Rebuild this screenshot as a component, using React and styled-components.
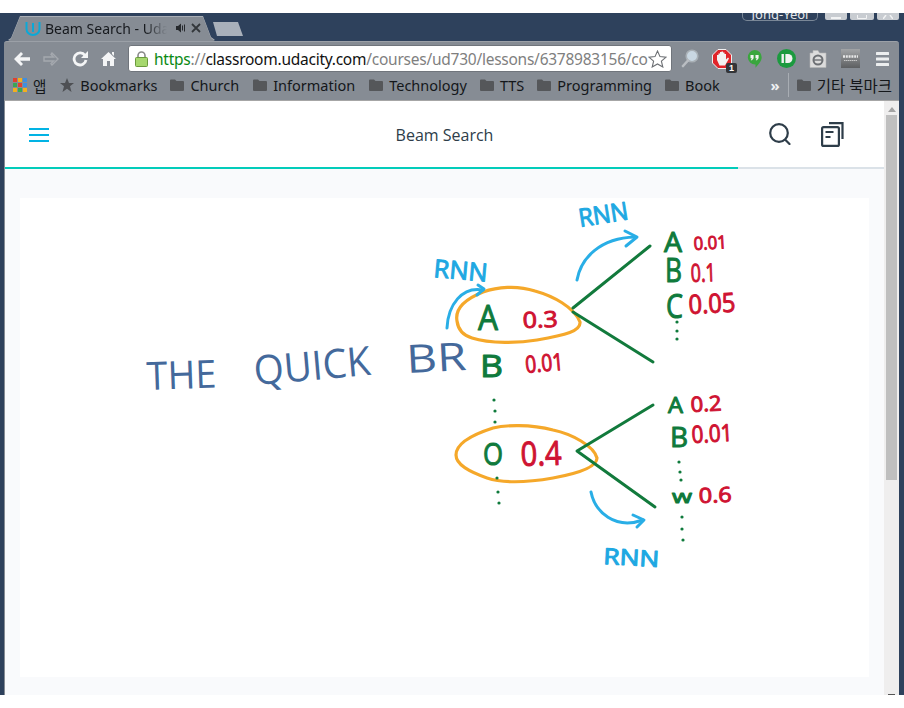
import styled, { createGlobalStyle } from "styled-components"

const UI_FONT = `"Noto Sans", "Open Sans", "Noto Sans CJK KR", sans-serif`

const GlobalStyle = createGlobalStyle`
    html, body {
        margin: 0;
        padding: 0;
        background: #ffffff;
    }
    body {
        font-family: ${UI_FONT};
    }
`

const Screen = styled.div`
    width: 904px;
    height: 708px;
    padding: 13px 0;
    box-sizing: border-box;
    overflow: hidden;
`

const Desktop = styled.div`
    height: 682px;
    background: #2e415c;
    padding: 0 5px 0 4px;
    display: flex;
    flex-direction: column;
`

const TabStrip = styled.div`
    height: 28px;
    flex: none;
    display: flex;
    align-items: flex-end;
    padding-left: 4px;
`

const TabOutline = styled.div`
    filter: drop-shadow(0 -1px 0 #a9aeb5);
`

const Tab = styled.div`
    width: 207px;
    height: 24px;
    box-sizing: border-box;
    background: #868c94;
    clip-path: polygon(0 100%, 3px 92%, 12px 0, 195px 0, 203px 88%, 207px 100%);
    display: flex;
    align-items: center;
    padding: 0 0 2px 17px;
    color: #16191d;
`

const TabTitle = styled.span`
    width: 122px;
    margin-left: 4px;
    font-size: 14px;
    white-space: nowrap;
    overflow: hidden;
    mask-image: linear-gradient(to right, #000 82%, transparent 100%);
`

const TabAudio = styled.svg`
    margin-left: 9px;
`

const TabClose = styled.svg`
    margin-left: 5px;
`

const NewTab = styled.div`
    width: 30px;
    height: 14px;
    margin: 0 auto 5px -2px;
    background: #a9b0ba;
    clip-path: polygon(0 0, 25px 0, 30px 100%, 4px 100%);
`

const WindowTop = styled.div`
    align-self: flex-start;
    display: flex;
`

const UserBadge = styled.div`
    width: 76px;
    height: 8px;
    box-sizing: border-box;
    margin-right: 4px;
    border: 1px solid #7a8797;
    border-top: none;
    border-radius: 0 0 5px 5px;
    color: #e4e7ea;
    font-size: 13px;
    line-height: 3px;
    text-align: center;
    overflow: hidden;
`

const WindowButton = styled.div`
    width: ${p => p.$w}px;
    height: 7px;
    margin-left: 3px;
    background: #c8ccd1;
    border-radius: 0 0 2px 2px;
    display: flex;
    justify-content: center;
    align-items: flex-end;
`

const WindowGlyph = styled.svg`
    display: block;
    margin-bottom: 1px;
`

const Toolbar = styled.div`
    height: 31px;
    flex: none;
    box-sizing: border-box;
    background: #868c94;
    border-top: 1px solid #9ba0a7;
    border-radius: 3px 3px 0 0;
    display: flex;
    align-items: center;
    padding: 3px 0 0 3px;
`

const NavSlot = styled.div`
    width: 29px;
    display: flex;
    justify-content: center;
`

const UrlBox = styled.div`
    width: 544px;
    height: 27px;
    margin: 0 2px 0 5px;
    flex: none;
    box-sizing: border-box;
    background: #ffffff;
    border: 1px solid #70757c;
    border-radius: 3px;
    display: flex;
    align-items: center;
    padding: 0 3px 0 6px;
    font-size: 15.5px;
    letter-spacing: -0.25px;
    color: #7f7f7f;
`

const UrlText = styled.span`
    width: 494px;
    margin-left: 6px;
    white-space: nowrap;
    overflow: hidden;
`

const Scheme = styled.span`
    color: #0b8a14;
`

const Host = styled.span`
    color: #111111;
`

const ExtSlot = styled.div`
    width: 32px;
    flex: none;
    display: flex;
    justify-content: center;
    align-items: center;
    position: relative;
`

const ExtBadge = styled.span`
    position: absolute;
    left: 20px;
    top: 14px;
    width: 11px;
    height: 10px;
    background: #333538;
    border-radius: 2px;
    color: #ffffff;
    font: 700 9px/10px "Liberation Sans", sans-serif;
    text-align: center;
`

const BookmarkBar = styled.div`
    height: 28px;
    flex: none;
    box-sizing: border-box;
    background: #868c94;
    display: flex;
    align-items: center;
    padding: 0 0 2px 9px;
    font-size: 14.5px;
    color: #14171a;
`

const Bookmark = styled.div`
    display: flex;
    align-items: center;
    gap: 6px;
    margin-right: ${p => p.$gap ?? 14}px;
    white-space: nowrap;
`

const CjkLabel = styled.span`
    font-size: 15.5px;
`

const Chevron = styled.span`
    margin-left: auto;
    margin-right: 8px;
    color: #eef0f2;
    font-size: 15px;
    font-weight: 700;
    line-height: 1;
`

const Divider = styled.div`
    width: 1px;
    height: 24px;
    margin-right: 8px;
    background: #a8adb3;
`

const Viewport = styled.div`
    flex: 1;
    min-height: 0;
    display: flex;
    border-top: 1px solid #a6a6a6;
    border-left: 1px solid #868c94;
`

const Page = styled.div`
    flex: 1;
    display: flex;
    flex-direction: column;
    background: #f9fafc;
`

const Header = styled.header`
    height: 66px;
    flex: none;
    box-sizing: border-box;
    background: #ffffff;
    display: grid;
    grid-template-columns: 1fr auto 1fr;
    align-items: center;
    padding: 0 40px 0 24px;
    color: #2e3d49;
`

const Burger = styled.div`
    width: 20px;
    display: flex;
    flex-direction: column;
    gap: 4px;
    margin-top: 1px;

    span {
        height: 2px;
        background: #02b3e4;
    }
`

const LessonTitle = styled.div`
    margin: 2px 0 0 16px;
    font-family: "Open Sans", sans-serif;
    font-size: 16px;
`

const HeaderIcons = styled.div`
    display: flex;
    align-items: center;
    justify-content: flex-end;
    gap: 30px;
`

const Progress = styled.div`
    height: 2px;
    flex: none;
    background: #dbe2e8;
`

const ProgressFill = styled.div`
    height: 100%;
    background: #02ccba;
`

const Lesson = styled.main`
    flex: 1;
    padding: 29px 15px 18px;
    display: flex;
`

const Card = styled.div`
    flex: 1;
    background: #ffffff;
`

const Sketch = styled.svg`
    display: block;
    width: 849px;
    height: 479px;
`

const Ink = styled.text`
    font-family: "Open Sans", "Liberation Sans", sans-serif;
    fill: ${p => p.$color};
    stroke: ${p => p.$color};
    stroke-width: ${p => p.$weight}px;
    stroke-linejoin: round;
`

const Scrollbar = styled.div`
    width: 15px;
    flex: none;
    background: #efeeee;
    display: flex;
    flex-direction: column;
    align-items: center;
    padding-top: 6px;
    box-sizing: border-box;
`

const ScrollArrow = styled.div`
    width: 0;
    height: 0;
    border-left: 4px solid transparent;
    border-right: 4px solid transparent;
    border-bottom: 5px solid #a3a3a3;
`

const ScrollThumb = styled.div`
    width: 11px;
    height: 365px;
    margin-top: 3px;
    background: #bfbfbf;
`

const ScrollEnd = styled.div`
    width: 7px;
    height: 1px;
    margin-top: auto;
    background: #555555;
`

const BLUE = "#1ea8e2"
const SLATE = "#44699b"
const GREEN = "#0f7a3c"
const RED = "#cf1332"
const ORANGE = "#f5a82a"

// x, baseline, width, height of the written word, and its tilt
const words = [
    ["THE", 147, 390, 70, 28, -2, SLATE],
    ["QUICK", 255, 385, 117, 29, -5, SLATE],
    ["BR", 407, 373, 60, 28, -3, SLATE],
    ["RNN", 580, 227, 50, 18, -9, BLUE],
    ["RNN", 433, 277, 54, 18, 5, BLUE],
    ["RNN", 603, 564, 56, 16, 3, BLUE],
    ["A", 478, 330, 20, 25, 0, GREEN],
    ["0.3", 523, 328, 35, 16, -2, RED],
    ["B", 480, 377, 23, 22, 0, GREEN],
    ["0.01", 526, 373, 38, 17, -5, RED],
    ["A", 664, 252, 18, 20, 0, GREEN],
    ["0.01", 694, 250, 33, 13, -3, RED],
    ["B", 665, 282, 17, 24, 0, GREEN],
    ["0.1", 691, 282, 25, 18, -2, RED],
    ["C", 666, 318, 17, 23, 0, GREEN],
    ["0.05", 689, 314, 47, 19, -3, RED],
    ["O", 483, 465, 20, 22, 0, GREEN],
    ["0.4", 521, 466, 41, 24, -2, RED],
    ["A", 668, 413, 15, 16, 0, GREEN],
    ["0.2", 691, 412, 31, 15, -3, RED],
    ["B", 670, 447, 18, 20, 0, GREEN],
    ["0.01", 692, 443, 41, 17, -3, RED],
    ["w", 672, 503, 20, 13, 0, GREEN],
    ["0.6", 699, 503, 33, 15, -2, RED],
]

const dots = [
    [677, 322], [677, 331], [677, 339],
    [494, 400], [495, 411], [495, 422],
    [497, 478], [498, 492], [499, 503],
    [679, 462], [680, 472], [681, 480],
    [682, 517], [682, 529], [683, 540],
]

const Word = ({ word }) => {
    const [text, x, y, width, height, tilt, color] = word
    return (
        <Ink
            x={x}
            y={y}
            fontSize={height / 0.72}
            textLength={width}
            lengthAdjust="spacingAndGlyphs"
            transform={`rotate(${tilt} ${x} ${y})`}
            $color={color}
            $weight={color === SLATE ? 0 : 1}
        >
            {text}
        </Ink>
    )
}

const BeamDiagram = () => (
    <Sketch viewBox="20 198 849 479">
        <g fill="none" strokeLinecap="round" strokeLinejoin="round">
            <path
                d="M457 321C455 310 463 300 483 292C497 287 517 285 535 291C553 296 574 307 580 322C581 331 566 335 537 340C520 343 490 344 472 338C462 335 458 329 457 321"
                stroke={ORANGE}
                strokeWidth="3.2"
            />
            <path
                d="M456 455C456 445 468 436 493 428C505 425 530 424 553 430C572 434 594 446 597 458C597 468 575 474 553 478C530 482 505 484 487 478C470 472 456 465 456 455Z"
                stroke={ORANGE}
                strokeWidth="3.2"
            />
            <g stroke="#127a3c" strokeWidth="3">
                <path d="M650 246L573 308" />
                <path d="M573 312L653 362" />
                <path d="M653 405L577 451L655 507" />
            </g>
            <g stroke="#29aee6" strokeWidth="3">
                <path d="M577 280C581 258 600 238 635 237" />
                <path d="M625 231L637 237L626 246" />
                <path d="M447 328C448 305 462 286 483 290" />
                <path d="M478 285L484 289L477 295" />
                <path d="M591 492C595 512 615 530 643 520" />
                <path d="M633 515L644 520L637 527" />
            </g>
        </g>
        {dots.map(([x, y]) => <circle key={`${x}-${y}`} cx={x} cy={y} r="1.6" fill={GREEN} />)}
        {words.map(word => <Word key={`${word[0]}-${word[1]}`} word={word} />)}
    </Sketch>
)

const UdacityMark = () => (
    <svg width="16" height="15" viewBox="0 0 16 15" fill="none" stroke="#0aa9d8" strokeWidth="2">
        <path d="M1.500 1v7a6.500 6 0 0 0 13 0V1" />
        <path d="M8 2v9" />
    </svg>
)

const BackIcon = () => (
    <svg width="16" height="14" viewBox="0 0 16 14" fill="#f4f5f6">
        <path d="M7 0L9 2L6 5.200H16V8.800H6L9 12L7 14L0 7Z" />
    </svg>
)

const ForwardIcon = () => (
    <svg width="16" height="14" viewBox="0 0 16 14" fill="none" stroke="#a5a9af" strokeWidth="1.400">
        <path d="M9 1L15 7L9 13L8 11.500L10.500 9H1V5H10.500L8 2.500Z" />
    </svg>
)

const ReloadIcon = () => (
    <svg width="16" height="16" viewBox="0 0 16 16" fill="none">
        <path d="M13 4.500A6 6 0 1 0 14 9" stroke="#f4f5f6" strokeWidth="2.800" />
        <path d="M16 0V7H9Z" fill="#f4f5f6" />
    </svg>
)

const HomeIcon = () => (
    <svg width="15" height="15" viewBox="0 0 15 15" fill="#f4f5f6">
        <path d="M7.500 1L15 8H13V15H9V10H6V15H2V8H0Z" />
        <path d="M11 1H13V5L11 3Z" />
    </svg>
)

const LockIcon = () => (
    <svg width="13" height="16" viewBox="0 0 13 16">
        <path d="M3 7V4.500a3.500 3.500 0 0 1 7 0V7" fill="none" stroke="#8a8a8a" strokeWidth="1.600" />
        <rect x="0.500" y="6.500" width="12" height="9" rx="1" fill="#a6d86e" stroke="#6b9a3d" />
    </svg>
)

const StarOutline = () => (
    <svg width="19" height="18" viewBox="0 0 19 18" fill="#ffffff" stroke="#6d7074" strokeWidth="1.100">
        <path d="M9.500 1L12 6.600L18 7.200L13.400 11.200L14.800 17L9.500 14L4.200 17L5.600 11.200L1 7.200L7 6.600Z" />
    </svg>
)

const MagnifierExt = () => (
    <svg width="18" height="19" viewBox="0 0 18 19">
        <circle cx="11" cy="7" r="5.800" fill="#c9d7e2" stroke="#a9b0b6" strokeWidth="1.600" />
        <path d="M7 11.500L2 17" stroke="#b9bdc2" strokeWidth="2.600" strokeLinecap="round" />
    </svg>
)

const StopExt = () => (
    <svg width="20" height="20" viewBox="0 0 20 20">
        <path d="M6 0.500H14L19.500 6V14L14 19.500H6L0.500 14V6Z" fill="#e0242a" stroke="#f0f0f0" strokeWidth="1" />
        <path d="M5 11V6H6.500V4.500H8V3H9.500V2.500H11V3.500H12.500V5H14V10.500L16 8.500L17 9.500L13 16.500H7.500Z" fill="#f2f2f2" />
    </svg>
)

const HangoutsExt = () => (
    <svg width="15" height="18" viewBox="0 0 15 18">
        <path d="M7.500 0a7.200 7.200 0 0 1 7.200 7.200c0 4-3.400 7-6.200 10.600V14.400A7.200 7.200 0 0 1 7.500 0Z" fill="#3aa63e" />
        <path d="M3.500 5H6.600V8.200L5 10.200H3.800L4.800 8.200H3.500ZM8.500 5H11.600V8.200L10 10.200H8.800L9.800 8.200H8.500Z" fill="#f4f4f4" />
    </svg>
)

const PushbulletExt = () => (
    <svg width="19" height="19" viewBox="0 0 19 19">
        <circle cx="9.500" cy="9.500" r="9.500" fill="#1c9a3f" />
        <rect x="4.500" y="5" width="2.400" height="9" fill="#f3f3f3" />
        <path d="M8.400 5H11A4.500 4.500 0 0 1 11 14H8.400Z" fill="#f3f3f3" />
    </svg>
)

const NoteExt = () => (
    <svg width="18" height="19" viewBox="0 0 18 19">
        <path d="M1 4H4V1.500H9L10.500 4H17V18.500H1Z" fill="#dcdcdc" stroke="#b5b5b5" strokeWidth="0.600" />
        <circle cx="9" cy="11" r="4.500" fill="none" stroke="#6d7074" strokeWidth="2" />
        <path d="M5 11H13" stroke="#6d7074" strokeWidth="1.400" />
    </svg>
)

const SlateExt = () => (
    <svg width="19" height="19" viewBox="0 0 19 19">
        <defs>
            <linearGradient id="slate-ext" x1="0" y1="0" x2="0" y2="1">
                <stop offset="0" stopColor="#a2a4a6" />
                <stop offset="1" stopColor="#5d5f61" />
            </linearGradient>
        </defs>
        <rect width="19" height="19" fill="url(#slate-ext)" />
        <path d="M2 7.500H17" stroke="#e8e8e8" strokeWidth="2.400" strokeDasharray="2 0.800" />
        <path d="M3 11.500H16" stroke="#c8c8c8" strokeWidth="1.200" strokeDasharray="1.500 0.500" />
    </svg>
)

const MenuIcon = () => (
    <svg width="13" height="14" viewBox="0 0 13 14" fill="#eceeef">
        <rect width="13" height="3" rx="0.500" />
        <rect y="5.500" width="13" height="3" rx="0.500" />
        <rect y="11" width="13" height="3" rx="0.500" />
    </svg>
)

const AppsIcon = () => {
    const colors = ["#e0412f", "#f2b01e", "#3f8fe0", "#3aa655", "#e0412f", "#3f8fe0", "#f2b01e", "#3aa655", "#f2b01e"]
    return (
        <svg width="14" height="14" viewBox="0 0 14 14">
            {colors.map((color, i) => (
                <rect key={i} x={(i % 3) * 5} y={Math.floor(i / 3) * 5} width="4" height="4" fill={color} />
            ))}
        </svg>
    )
}

const StarIcon = () => (
    <svg width="14" height="14" viewBox="0 0 14 14" fill="#4e5054">
        <path d="M7 0L9 5H14L10 8.300L11.500 14L7 10.800L2.500 14L4 8.300L0 5H5Z" />
    </svg>
)

const FolderIcon = () => (
    <svg width="14" height="12" viewBox="0 0 14 12" fill="#55575a">
        <path d="M0 1.500Q0 0.500 1 0.500H5L6.500 2H13Q14 2 14 3V11Q14 12 13 12H1Q0 12 0 11Z" />
    </svg>
)

const SearchIcon = () => (
    <svg width="22" height="22" viewBox="0 0 22 22" fill="none" stroke="#2e3d49" strokeWidth="2.200">
        <circle cx="10" cy="10" r="8.800" />
        <path d="M16.500 17L20.500 21" strokeLinecap="round" />
    </svg>
)

const NotesIcon = () => (
    <svg width="23" height="25" viewBox="0 0 23 25" fill="none" stroke="#2e3d49" strokeWidth="2.200">
        <path d="M8 1.100H21.500V17" />
        <rect x="1.100" y="5.100" width="16.800" height="18.800" rx="1.500" />
        <path d="M4.500 10H12.500M4.500 15H9.500" />
    </svg>
)

const bookmarks = [
    { label: "Church", gap: 14 },
    { label: "Information", gap: 14 },
    { label: "Technology", gap: 13 },
    { label: "TTS", gap: 13 },
    { label: "Programming", gap: 13 },
    { label: "Book", gap: 0 },
]

const App = () => {
    return (
        <Screen>
            <GlobalStyle />
            <Desktop>
                <TabStrip>
                    <TabOutline>
                        <Tab>
                            <UdacityMark />
                            <TabTitle>Beam Search - Udacity</TabTitle>
                            <TabAudio width="10" height="10" viewBox="0 0 10 10" fill="#26292d">
                                <path d="M0 3H2L5 0.500V9.500L2 7H0Z" />
                                <path d="M6.500 2.500V7.500M8.500 1.500V8.500" stroke="#26292d" fill="none" />
                            </TabAudio>
                            <TabClose width="10" height="10" viewBox="0 0 10 10" stroke="#33373b" strokeWidth="1.800">
                                <path d="M1 1L9 9M9 1L1 9" />
                            </TabClose>
                        </Tab>
                    </TabOutline>
                    <NewTab />
                    <WindowTop>
                        <UserBadge>Jong-Yeol</UserBadge>
                        <WindowButton $w={22}>
                            <WindowGlyph width="10" height="2" viewBox="0 0 10 2" fill="#f2f3f4">
                                <rect width="10" height="2" />
                            </WindowGlyph>
                        </WindowButton>
                        <WindowButton $w={24}>
                            <WindowGlyph width="10" height="4" viewBox="0 0 10 4" fill="none" stroke="#f2f3f4">
                                <path d="M0.500 0V3.500H9.500V0" />
                            </WindowGlyph>
                        </WindowButton>
                        <WindowButton $w={22}>
                            <WindowGlyph width="10" height="4" viewBox="0 0 10 4" stroke="#f2f3f4" strokeWidth="1.500">
                                <path d="M3 0L0 4M7 0L10 4" />
                            </WindowGlyph>
                        </WindowButton>
                    </WindowTop>
                </TabStrip>
                <Toolbar>
                    <NavSlot><BackIcon /></NavSlot>
                    <NavSlot><ForwardIcon /></NavSlot>
                    <NavSlot><ReloadIcon /></NavSlot>
                    <NavSlot><HomeIcon /></NavSlot>
                    <UrlBox>
                        <LockIcon />
                        <UrlText>
                            <Scheme>https</Scheme>://<Host>classroom.udacity.com</Host>/courses/ud730/lessons/6378983156/concepts
                        </UrlText>
                        <StarOutline />
                    </UrlBox>
                    <ExtSlot><MagnifierExt /></ExtSlot>
                    <ExtSlot><StopExt /><ExtBadge>1</ExtBadge></ExtSlot>
                    <ExtSlot><HangoutsExt /></ExtSlot>
                    <ExtSlot><PushbulletExt /></ExtSlot>
                    <ExtSlot><NoteExt /></ExtSlot>
                    <ExtSlot><SlateExt /></ExtSlot>
                    <ExtSlot><MenuIcon /></ExtSlot>
                </Toolbar>
                <BookmarkBar>
                    <Bookmark $gap={14}><AppsIcon />앱</Bookmark>
                    <Bookmark $gap={13}><StarIcon />Bookmarks</Bookmark>
                    {bookmarks.map(b => (
                        <Bookmark key={b.label} $gap={b.gap}><FolderIcon />{b.label}</Bookmark>
                    ))}
                    <Chevron>»</Chevron>
                    <Divider />
                    <Bookmark $gap={7}><FolderIcon /><CjkLabel>기타 북마크</CjkLabel></Bookmark>
                </BookmarkBar>
                <Viewport>
                    <Page>
                        <Header>
                            <Burger><span /><span /><span /></Burger>
                            <LessonTitle>Beam Search</LessonTitle>
                            <HeaderIcons>
                                <SearchIcon />
                                <NotesIcon />
                            </HeaderIcons>
                        </Header>
                        <Progress>
                            <ProgressFill style={{ width: "83.4%" }} />
                        </Progress>
                        <Lesson>
                            <Card>
                                <BeamDiagram />
                            </Card>
                        </Lesson>
                    </Page>
                    <Scrollbar>
                        <ScrollArrow />
                        <ScrollThumb />
                        <ScrollEnd />
                    </Scrollbar>
                </Viewport>
            </Desktop>
        </Screen>
    )
}

export default App
